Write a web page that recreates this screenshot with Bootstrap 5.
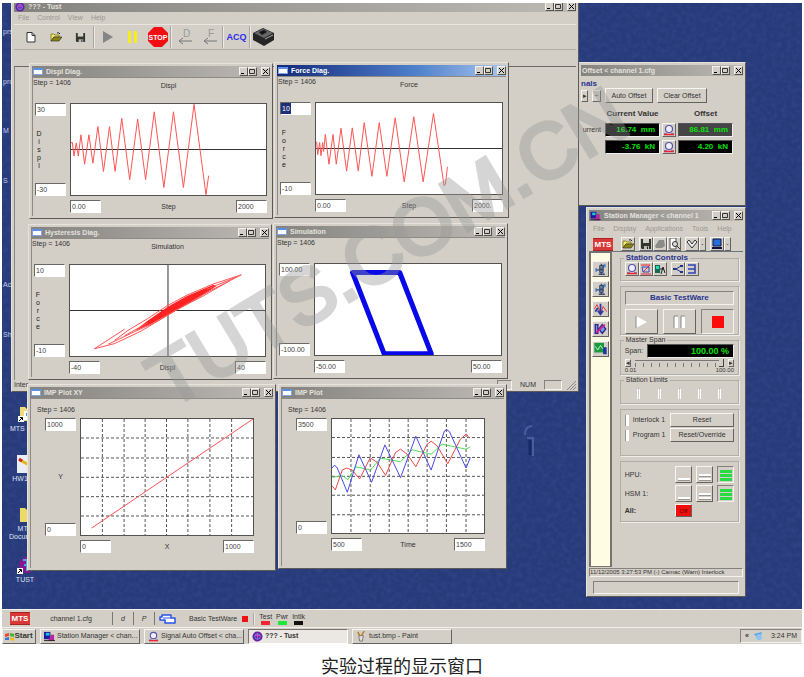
<!DOCTYPE html>
<html lang="zh">
<head>
<meta charset="utf-8">
<meta name="viewport" content="width=device-width, initial-scale=1">
<title>Tust</title>
<link href="https://cdn.jsdelivr.net/npm/bootstrap@5.3.0/dist/css/bootstrap.min.css" rel="stylesheet">
<style>
:root{--face:#d3cfc7;--dark:#77746f;--navy:#273a7a}
body{font-family:"Liberation Sans",sans-serif;font-size:7px;line-height:8px;color:#333;background:#fff;padding:3px 2px 0}
button{font:inherit;color:inherit;padding:0}
.desk{background:var(--navy);overflow:hidden;min-height:604px}
.texture{position:absolute;inset:0;width:100%;height:100%}
.win{position:absolute;background:var(--face);border:1px solid;border-color:#e6e3dc #5c5a56 #5c5a56 #e6e3dc;padding:2px}
.titlebar{height:11px;background:linear-gradient(90deg,#85837f,#bdbab4);color:#e4e2dd;font-weight:700;gap:3px;padding-left:1px}
.titlebar.live{background:linear-gradient(90deg,#14297a,#4d7fca 60%,#a9c6ee);color:#fff}
.wicon{width:10px;height:7px;background:#fff;border:1px solid #7fa4e8;border-top:2px solid #5d8ee6}
.wbtn{width:9px;height:9px;background:var(--face);border:1px solid;border-color:#f4f2ee #55534f #55534f #f4f2ee;display:flex;align-items:center;justify-content:center}
.wbtn svg{width:7px;height:7px}
.plotgrid{display:grid;grid-template-columns:31px 1fr;column-gap:4px;padding:0 3px 3px 2px;border-left:1px solid #8e8b86;border-top:1px solid #8e8b86}
.head{height:25px;white-space:nowrap}
.headtitle{padding-top:4px}
.step{padding-top:1px;width:0}
.shiftl{margin-left:-2px}
.plot{display:block;width:100%;height:93px;background:#fff;border:1px solid #55534f}
.plot *{vector-effect:non-scaling-stroke;fill:none}
.plot .solid{fill:#f22}
.axisrow{padding-top:4px}
.field{width:31px;height:13px;font-size:7px;line-height:9px;color:#444;background:#fff;border:1px solid;border-color:#6b6965 #fff #fff #6b6965;border-radius:0;padding:0 1px;min-width:0}
.field.sel{color:#fff;background:linear-gradient(90deg,#1d2f78 10px,#fff 10px)}
.vlabel{text-align:center;width:8px;color:#222}
.imp .plotgrid{padding:0 19px 15px 14px}
.imp .head{height:19px}
.imp .step{padding-top:7px;margin-left:-8px}
.imp .plot{height:118px}
.imp2 .plotgrid{padding-left:14px}
.imp2 .plot{height:116px}
.menu{color:#9a9791;font-size:7px}
.menu a{color:inherit;text-decoration:none}
.w-main .menu{padding:2px 4px}
.tb{height:26px;border-top:1px solid #e9e6e0;border-bottom:1px solid #b0ada6}
.tb button,.flatbtn{background:none;border:0;display:flex;align-items:center;justify-content:center}
.tb button{width:25px;height:24px}
.vsep{width:2px;height:22px;border-left:1px solid #aaa7a0;border-right:1px solid #eceae5}
.mdi{border-top:1px solid #6c6a66;border-left:1px solid #8b8883;margin-top:16px}
.raised{background:var(--face);border:1px solid;border-color:#f7f5f1 #65635f #65635f #f7f5f1;display:flex;align-items:center;justify-content:center}
.sunk{border:1px solid;border-color:#85827d #f5f3ef #f5f3ef #85827d}
.readout{background:#000;color:#0be00b;font-weight:700;text-align:right;font-size:8px;line-height:12px;border:1px solid;border-color:#555 #eee #eee #555;padding-right:4px;white-space:pre}
.readout.dim{background:#454545}
.group{border:1px solid #b1aea7;box-shadow:1px 1px 0 #efede8;position:relative}
.gtitle{background:var(--face);line-height:8px;padding:0 2px;width:max-content;margin:-5px 0 0 3px}
.blue{color:#29348e;font-weight:700}
.bold8{font-size:8px;font-weight:700}
.ico{width:14px;height:14px}
.ico svg{width:12px;height:12px}
.palette{background:#fffce4;width:29px;border:1px solid #77746f;border-left-width:2px;border-right-width:2px}
.palette .raised{width:17px;height:16px}
.mts{background:#d83838;color:#fff;font-weight:700;font-size:8px;line-height:11px;width:20px;text-align:center;border-top:1px solid #a22;border-bottom:1px solid #a22}
.tbtn{width:33px;height:25px}
.slot{width:3px;height:11px;border-left:1px solid #fff;border-right:1px solid #fff;border-top:1px solid #aaa}
.lvl{width:17px;height:17px;flex-direction:column;gap:1px;justify-content:flex-end;padding-bottom:1px}
.lvl i{display:block;width:12px;height:3px;background:#fff;border-bottom:1px solid #99968f}
.lvl.on i{background:#27dc42;border:0;height:3px}
.check{width:4px;height:11px;appearance:none;background:#fff;border:0;border-left:1px solid #999;margin:0}
.scale{appearance:none;background:repeating-linear-gradient(90deg,#777 0 1px,transparent 1px 8px) 0 5px/100% 4px no-repeat,linear-gradient(#777,#777) 0 2px/100% 1px no-repeat;height:9px;min-width:0}
.scale::-webkit-slider-thumb{appearance:none;width:5px;height:8px;background:var(--face);border-right:1px solid #444;border-bottom:1px solid #444}
.panel{gap:5px;min-width:0}
.offgrid{display:grid;grid-template-columns:24px 55px 18px 55px;row-gap:3px;align-items:center}
.offgrid b{font-size:8px;line-height:13px;text-align:center;white-space:nowrap}
.hpu{display:grid;grid-template-columns:1fr 17px 17px 17px;gap:2px 4px;align-items:center}
.w-sta .menu{gap:9px!important}
.dico{position:absolute;color:#dfe3f3;text-align:center;width:42px}
.dico svg{display:block;margin:0 auto 2px;width:18px;height:18px}
.edge{position:absolute;left:1px;color:#c6cde8}
.wm{position:absolute;left:0;top:0;width:800px;height:604px;pointer-events:none}
.bar{background:var(--face);border-top:1px solid #f3f1ec;height:18px}
.bar.task{height:17px}
.appbtn{background:none;border:0;border-right:1px solid #777;height:13px}
.taskbtn{width:100px;height:15px;gap:2px;justify-content:flex-start;padding-left:3px;white-space:nowrap;overflow:hidden}
.taskbtn svg{width:11px;height:11px;flex:none}
.taskbtn.act{background:#ebe8e3;border-color:#77746f #fff #fff #77746f;font-weight:700}
.lamp i{display:block;width:9px;height:4px;margin:0 auto}
.caption-line{font:18px/20px "Noto Sans CJK SC",sans-serif;color:#222;text-align:center;padding:11px 0 2px}
/* window places on the desktop */
.w-main{left:9px;top:-5px;width:568px;height:394px;padding-bottom:1px}
.w-displ{left:27px;top:60px;width:244px}
.w-force{left:272px;top:59px;width:235px}
.w-hyst{left:26px;top:221px;width:244px}
.w-sim{left:271px;top:220px;width:235px}
.w-xy{left:25px;top:381px;width:249px}
.w-imp{left:276px;top:381px;width:229px}
.w-off{left:576px;top:59px;width:168px;height:144px}
.w-sta{left:584px;top:204px;width:160px;height:390px}
</style>
<script src="https://cdn.jsdelivr.net/npm/bootstrap@5.3.0/dist/js/bootstrap.bundle.min.js"></script>
</head>
<body class="min-vh-100 d-flex flex-column">
<svg width="0" height="0" class="position-absolute" aria-hidden="true">
<symbol id="i-open" viewBox="0 0 12 12"><path d="M1 3h3l1 1h4v2H4L1 10z" fill="#f1e36b" stroke="#6f6600" stroke-width=".7"/><path d="M4 6h8l-3 4H1z" fill="#8c8513" stroke="#333" stroke-width=".7"/><path d="M7 2q2-1 3 1" stroke="#222" fill="none"/></symbol>
<symbol id="i-save" viewBox="0 0 12 12"><path d="M1 1h10v10H2L1 10z" fill="#34372b"/><path d="M3 1h6v4H3z" fill="#d5d2ca"/><path d="M4 8h5v3H4z" fill="#bbb"/><path d="M7 8.500h1V11H7z" fill="#222"/></symbol>
<symbol id="i-ring" viewBox="0 0 12 12"><circle cx="6" cy="5" r="3.500" fill="#eef" stroke="#5454a8" stroke-width="1.200"/><path d="M1 10h3M8 10h3" stroke="#33b" /><path d="M1 10.500h10" stroke="#e23" stroke-width="1.500"/></symbol>
<symbol id="i-man" viewBox="0 0 16 16"><path d="M9 2v12M6 14h7M3 9h9M11 3v4" stroke="#3c4b68" fill="none" stroke-width="1.600"/><path d="M7 4h4v4H7zM7 9h4v3H7z" fill="#6b8096" stroke="#34436a"/><path d="M13 2v4M3 7v4" stroke="#27c" stroke-width="1.500"/></symbol>
<symbol id="i-pc" viewBox="0 0 12 12"><path d="M0 1h7v8H0z" fill="#1c1c9a"/><path d="M2 2h4v3H2z" fill="#1bc5dc"/><path d="M7 4h4v7H5V8h2z" fill="#b722a4"/><path d="M0 10h12v1H0z" fill="#222"/></symbol>
<symbol id="i-tust" viewBox="0 0 12 12"><circle cx="6" cy="6" r="5.500" fill="#6a209e"/><circle cx="6" cy="6" r="3" fill="none" stroke="#47a5ea"/><path d="M6 2v7M3 5h6" stroke="#e04bd0"/></symbol>
</svg>

<main class="desk flex-grow-1 position-relative">
<svg class="texture" aria-hidden="true"><filter id="grain"><feTurbulence type="fractalNoise" baseFrequency=".2" numOctaves="2" seed="4"/><feColorMatrix values="0 0 0 0 .05  0 0 0 0 .09  0 0 0 0 .32  0 .7 0 0 -.25"/></filter><rect width="100%" height="100%" filter="url(#grain)"/></svg>
<span class="edge" style="top:25px">prs,</span><span class="edge" style="top:75px">pro</span><span class="edge" style="top:124px">M</span><span class="edge" style="top:174px">S</span><span class="edge" style="top:278px">Ac</span><span class="edge" style="top:328px">Sh</span>
<div class="dico" style="left:2px;top:402px"><svg viewBox="0 0 18 18"><path d="M4 2h5l2 2h7v12H4z" fill="#eddc78"/><path d="M8 6h10v9H8z" fill="#fff"/><path d="M10 8h8v3h-8z" fill="#4a95e4"/><path d="M2 11h6v6H2z" fill="#fff"/><path d="M3 16l3-3M4 12.500h2.500V15" stroke="#000" fill="none"/></svg>MTS Flex</div>
<div class="dico" style="left:0;top:452px"><svg viewBox="0 0 18 18"><path d="M3 0h14v18H3z" fill="#e9edf8"/><path d="M6 5l9 5" stroke="#e6b413" stroke-width="3"/><path d="M5 4l3 2" stroke="#c22" stroke-width="3"/></svg>HW1.2</div>
<div class="dico" style="left:2px;top:502px"><svg viewBox="0 0 18 18"><path d="M4 3h5l2 2h7v12H4z" fill="#ecd968"/></svg>MTS<br>Document</div>
<div class="dico" style="left:2px;top:553px"><svg viewBox="0 0 18 18"><circle cx="11" cy="9" r="8" fill="#84188f"/><path d="M7 4h8M11 3v12M8 9h8" stroke="#48a8e8" stroke-width="2"/><path d="M1 12h6v6H1z" fill="#fff"/><path d="M2 17l3-3M3 13.500h2.500V16" stroke="#000" fill="none"/></svg>TUST</div>
<svg class="dico" style="left:514px;top:420px;height:40px" viewBox="0 0 42 40" aria-hidden="true"><path d="M9 12q0-9 7-9M11 15l6 0v18" stroke="#4c5d9c" stroke-width="2" fill="none"/><path d="M14 17v15" stroke="#17286a" stroke-width="3"/></svg>

<section class="win w-off">
<div class="titlebar d-flex align-items-center">Offset &lt; channel 1.cfg</div>
<div class="blue bold8 pt-1">nals</div>
<div class="d-flex align-items-center mb-1"><button class="raised" style="width:7px;height:12px">▸</button><button class="raised ms-1" style="width:9px;height:12px" aria-label="Spin">÷</button><button class="raised ms-1" style="width:48px;height:15px">Auto Offset</button><button class="raised ms-1" style="width:50px;height:15px">Clear Offset</button></div>
<div class="offgrid"><span></span><b>Current Value</b><span></span><b>Offset</b>
<span class="text-end pe-1">urrent</span><output class="readout">16.74  mm</output><button class="raised ico mx-auto" aria-label="Zero"><svg><use href="#i-ring"/></svg></button><output class="readout dim">86.81  mm</output>
<span></span><output class="readout">-3.76  kN</output><button class="raised ico mx-auto" aria-label="Zero"><svg><use href="#i-ring"/></svg></button><output class="readout">4.20  kN</output></div>
</section>

<section class="win w-main d-flex flex-column">
<div class="titlebar d-flex align-items-center"><svg width="10" height="10"><use href="#i-tust"/></svg>??? - Tust</div>
<nav class="menu d-flex gap-2"><a href="#">File</a><a href="#">Control</a><a href="#">View</a><a href="#">Help</a></nav>
<div class="tb d-flex align-items-center ps-1">
<button aria-label="New"><svg width="10" height="11"><path d="M1 .500h5l3 3V10H1z" fill="#fff" stroke="#333"/><path d="M6 .500v3h3" fill="none" stroke="#333"/></svg></button>
<button aria-label="Open"><svg width="12" height="12"><use href="#i-open"/></svg></button>
<button aria-label="Save"><svg width="11" height="11"><use href="#i-save"/></svg></button><i class="vsep"></i>
<button aria-label="Run"><svg width="12" height="14"><path d="M1 1l10 6-10 6z" fill="#858585"/></svg></button>
<button aria-label="Pause"><svg width="12" height="12"><path d="M1 0h3v12H1zM7 0h3v12H7z" fill="#f7ee16"/></svg></button>
<button aria-label="Stop"><svg width="20" height="20"><path d="M6 0h8l6 6v8l-6 6H6l-6-6V6z" fill="#f30d13"/><text x="10" y="13" text-anchor="middle" font-size="7" font-weight="700" fill="#fff">STOP</text></svg></button><i class="vsep"></i>
<button aria-label="D"><svg width="16" height="18"><text x="6" y="9" font-size="10" fill="#999">D</text><path d="M15 13H3M6 10l-4 3 4 3" stroke="#777" fill="none"/></svg></button>
<button aria-label="F"><svg width="16" height="18"><text x="6" y="9" font-size="10" fill="#999">F</text><path d="M15 13H3M6 10l-4 3 4 3" stroke="#777" fill="none"/></svg></button><i class="vsep"></i>
<button class="fw-bold" style="color:#2b2bf0;font-size:9px">ACQ</button><i class="vsep"></i>
<button aria-label="Controller"><svg width="21" height="18"><path d="M0 5l10-5 11 5v7l-10 6L0 12z" fill="#262626"/><path d="M1 5l9-4 10 4-9 5z" fill="#666"/><path d="M6 4l5-2 3 2-5 3z" fill="#161616"/><path d="M12 11l8-4" stroke="#aaa"/></svg></button>
</div>
<div class="mdi flex-grow-1"></div>
<div class="d-flex align-items-center mt-auto"><span>Inter</span><span class="sunk ms-auto" style="width:15px;height:10px"></span><span class="px-1 ms-1">NUM</span><span class="sunk ms-1" style="width:18px;height:10px"></span><svg width="10" height="10" class="ms-1"><path d="M1 10l9-9M4 10l6-6M7 10l3-3" stroke="#888"/></svg></div>
</section>

<section class="win w-displ"><div class="titlebar d-flex align-items-center"><i class="wicon"></i>Displ Diag.</div>
<div class="plotgrid"><div class="head step shiftl">Step = 1406</div><div class="head headtitle text-center">Displ</div>
<div class="d-flex flex-column justify-content-between"><input class="field" aria-label="Displ maximum" value="30"><span class="vlabel">D<br>i<br>s<br>p<br>l</span><input class="field" aria-label="Displ minimum" value="-30"></div>
<svg class="plot" viewBox="209 311 588 278" preserveAspectRatio="none"><path d="M209 450H797" stroke="#333"/><polyline stroke="#f55" points="209,430 213,428 218,470 225,430 231,470 239,405 250,495 263,405 275,492 290,380 307,517 325,380 342,517 362,355 386,542 410,357 434,542 460,335 489,566 518,335 548,566 580,312 616,588 624,530"/></svg>
<span></span><div class="axisrow d-flex justify-content-between align-items-center"><input class="field" aria-label="Step start" value="0.00"><span>Step</span><input class="field" aria-label="Step end" value="2000"></div></div></section>

<section class="win w-force"><div class="titlebar live d-flex align-items-center"><i class="wicon"></i>Force Diag.</div>
<div class="plotgrid"><div class="head step shiftl">Step = 1406</div><div class="head headtitle text-center">Force</div>
<div class="d-flex flex-column justify-content-between"><input class="field sel" aria-label="Force maximum" value="10"><span class="vlabel">F<br>o<br>r<br>c<br>e</span><input class="field" aria-label="Force minimum" value="-10"></div>
<svg class="plot" viewBox="135 307 559 278" preserveAspectRatio="none"><path d="M135 446H694" stroke="#333"/><polyline stroke="#f55" points="137,425 140,465 146,428 150,468 155,428 158,455 163,403 174,494 186,403 196,494 210,384 227,515 244,383 262,515 280,367 303,531 325,367 348,531 373,352 400,548 429,349 457,548 488,339 520,560 524,555 530,502"/></svg>
<span></span><div class="axisrow d-flex justify-content-between align-items-center"><input class="field" aria-label="Step start" value="0.00"><span>Step</span><input class="field" aria-label="Step end" value="2000."></div></div></section>

<section class="win w-hyst"><div class="titlebar d-flex align-items-center"><i class="wicon"></i>Hysteresis Diag.</div>
<div class="plotgrid"><div class="head step shiftl">Step = 1406</div><div class="head headtitle text-center">Simulation</div>
<div class="d-flex flex-column justify-content-between"><input class="field" aria-label="Force maximum" value="10"><span class="vlabel">F<br>o<br>r<br>c<br>e</span><input class="field" aria-label="Force minimum" value="-10"></div>
<svg class="plot" viewBox="204 148 593 278" preserveAspectRatio="none"><path d="M204 287H797M502 148V426" stroke="#333"/><path class="solid" d="M400 350L440 318L500 276L560 243L640 208L650 212L600 244L520 290L450 328z"/><path stroke="#f55" d="M278 404L370 344M278 404L340 388L420 350L520 290L620 232L725 178L640 206L560 240L500 272L440 312L380 348L340 378M320 390L400 352L460 325L530 284L610 242L690 196M370 364L440 325M620 222L710 185"/></svg>
<span></span><div class="axisrow d-flex justify-content-between align-items-center"><input class="field" aria-label="Displ start" value="-40"><span>Displ</span><input class="field" aria-label="Displ end" value="40"></div></div></section>

<section class="win w-sim"><div class="titlebar d-flex align-items-center"><i class="wicon"></i>Simulation</div>
<div class="plotgrid"><div class="head step shiftl">Step = 1406</div><div class="head"></div>
<div class="d-flex flex-column justify-content-between"><input class="field" aria-label="Maximum" value="100.00"><input class="field" aria-label="Minimum" value="-100.00"></div>
<svg class="plot" viewBox="130 144 560 279" preserveAspectRatio="none"><path d="M243 170H385L480 419H338z" stroke="#0808e8" stroke-width="5" stroke-linejoin="round"/></svg>
<span></span><div class="axisrow d-flex justify-content-between align-items-center"><input class="field" aria-label="Start" value="-50.00"><input class="field" aria-label="End" value="50.00"></div></div></section>

<section class="win imp w-xy"><div class="titlebar d-flex align-items-center"><i class="wicon"></i>IMP Plot XY</div>
<div class="plotgrid"><div class="head step">Step = 1406</div><div class="head"></div>
<div class="d-flex flex-column justify-content-between"><input class="field" aria-label="Y maximum" value="1000"><span class="text-center">Y</span><input class="field" aria-label="Y minimum" value="0"></div>
<svg class="plot" viewBox="240 112 523 354" preserveAspectRatio="none"><path stroke="#555" stroke-dasharray="3 2" d="M305 112V466M371 112V466M435 112V466M500 112V466M565 112V466M632 112V466M698 112V466M240 170H763M240 231H763M240 290H763M240 349H763M240 408H763"/><path stroke="#f55" d="M272 445L763 112"/></svg>
<span></span><div class="axisrow d-flex justify-content-between align-items-center"><input class="field" aria-label="X start" value="0"><span>X</span><input class="field" aria-label="X end" value="1000"></div></div></section>

<section class="win imp imp2 w-imp"><div class="titlebar d-flex align-items-center"><i class="wicon"></i>IMP Plot</div>
<div class="plotgrid"><div class="head step">Step = 1406</div><div class="head"></div>
<div class="d-flex flex-column justify-content-between"><input class="field" aria-label="Maximum" value="3500"><input class="field" aria-label="Minimum" value="0"></div>
<svg class="plot" viewBox="184 114 457 344" preserveAspectRatio="none"><path stroke="#555" stroke-dasharray="3 2" d="M241 114V458M299 114V458M356 114V458M413 114V458M470 114V458M528 114V458M587 114V458M184 170H641M184 230H641M184 287H641M184 344H641M184 403H641"/><polyline stroke="#54dc54" points="186,290 215,285 232,297 255,258 300,268 330,232 390,243 425,207 482,220 515,190 587,205 600,198"/><polyline stroke="#f04848" points="184,315 194,328 215,268 228,262 245,268 267,295 299,231 320,245 345,284 375,215 390,205 410,220 436,258 470,190 482,181 500,195 532,249 570,175 588,159 597,172"/><polyline stroke="#4a4ae6" points="184,262 192,253 200,262 230,335 265,222 303,305 343,192 390,291 436,166 482,268 522,150 529,146 537,152 587,262 600,230"/></svg>
<span></span><div class="axisrow d-flex justify-content-between align-items-center"><input class="field" aria-label="Time start" value="500"><span>Time</span><input class="field" aria-label="Time end" value="1500"></div></div></section>

<section class="win w-sta d-flex flex-column">
<div class="titlebar d-flex align-items-center"><svg width="11" height="10"><use href="#i-pc"/></svg><span class="text-nowrap">Station Manager &lt; channel 1</span></div>
<nav class="menu d-flex ps-1 pt-1"><a href="#">File</a><a href="#">Display</a><a href="#">Applications</a><a href="#">Tools</a><a href="#">Help</a></nav>
<div class="d-flex align-items-center ps-1 pt-1"><span class="mts me-2">MTS</span>
<button class="raised ico" aria-label="Open"><svg><use href="#i-open"/></svg></button><button class="raised ico ms-1" aria-label="Save"><svg><use href="#i-save"/></svg></button><button class="raised ico" aria-label="Print"><svg viewBox="0 0 12 12"><path d="M1 8l4-6h5l1 6-3 2H2z" fill="#8b8b8b"/></svg></button><button class="raised ico" aria-label="Preview"><svg viewBox="0 0 12 12"><path d="M2 0h6v11H2z" fill="#fff" stroke="#555"/><circle cx="7" cy="6" r="2.500" fill="#ddd" stroke="#333"/><path d="M9 8l3 3" stroke="#333"/></svg></button>
<button class="raised ico ms-1" aria-label="Check"><svg viewBox="0 0 12 12"><path d="M1 4l5 6 5-6-2-2-3 4-3-4z" fill="#eee" stroke="#333"/></svg></button><button class="raised" style="width:7px;height:14px" aria-label="More">-</button>
<button class="raised ico ms-1" aria-label="Display"><svg viewBox="0 0 12 12"><path d="M2 1h8v7H2z" fill="#2470d8" stroke="#114"/><path d="M1 10h10" stroke="#114" stroke-width="2"/></svg></button><button class="raised" style="width:7px;height:14px" aria-label="More">-</button></div>
<div class="d-flex flex-grow-1 border-top border-secondary">
<div class="palette d-flex flex-column align-items-center gap-1 pt-2">
<button class="raised" aria-label="Station setup"><svg width="15" height="14"><use href="#i-man"/></svg></button>
<button class="raised" aria-label="Manual command"><svg width="15" height="14"><use href="#i-man"/></svg></button>
<button class="raised" aria-label="Function generator"><svg width="15" height="14" viewBox="0 0 16 16"><path d="M1 8l3-5 4 10 3-8 4 6" stroke="#e23" fill="none"/><path d="M8 2v12M5 10l3 4 3-4M2 11l3-4" stroke="#2a3aa0" fill="none" stroke-width="2"/></svg></button>
<button class="raised" aria-label="Scope"><svg width="15" height="14" viewBox="0 0 16 16"><path d="M2 3h3v10H2zM10 3l4 5-4 5-4-5z" fill="#6fa0dd" stroke="#31208e" stroke-width="1.500"/><path d="M3 12l10-9" stroke="#d3208e" stroke-width="2"/></svg></button>
<button class="raised" aria-label="Test"><svg width="15" height="14" viewBox="0 0 16 16"><path d="M1 1h11v11H1z" fill="#1a9b3a"/><path d="M2 5l3 4 3-5 3 4" stroke="#cfe" fill="none"/><path d="M11 6h4v8h-4z" fill="#1e35a0"/></svg></button>
</div>
<div class="panel flex-grow-1 d-flex flex-column ps-2 pe-1">
<div class="group" style="margin-top:6px"><div class="gtitle blue bold8">Station Controls</div><div class="d-flex ps-1" style="padding-bottom:4px">
<button class="raised ico" aria-label="Offset"><svg><use href="#i-ring"/></svg></button><button class="raised ico" aria-label="Limits"><svg viewBox="0 0 12 12"><path d="M1 2h9L3 9" stroke="#e23" fill="none"/><path d="M2 4h7v5H3z" stroke="#34b" fill="none"/><path d="M1 11h10" stroke="#e23"/></svg></button><button class="raised ico" aria-label="Auto"><svg viewBox="0 0 12 12"><path d="M1 2h5v8H1z" fill="#156b53"/><path d="M2 3h3v3H2z" fill="#2bd7b4"/><path d="M6 6h4M9 4l2 6M9 4l-2 7" stroke="#222"/></svg></button>
<button class="raised ico ms-1" aria-label="Split"><svg viewBox="0 0 12 12"><path d="M4 6l5-3M4 6l5 3M1 6h4" stroke="#22338e" fill="none"/><path d="M8 2h3v2H8zM8 8h3v2H8zM1 5h3v2H1z" fill="#22338e"/></svg></button><button class="raised ico" aria-label="Merge"><svg viewBox="0 0 12 12"><path d="M2 2h7v8H2M2 6h7" stroke="#3340b8" stroke-width="1.600" fill="none"/></svg></button></div></div>
<div class="group p-1 pb-0"><div class="sunk blue bold8 text-center" style="line-height:12px">Basic TestWare</div>
<div class="d-flex justify-content-between mt-1"><button class="raised tbtn" aria-label="Run"><svg width="13" height="14"><path d="M1 1l11 6-11 6z" fill="#fff"/><path d="M1 13V1" stroke="#888"/></svg></button><button class="raised tbtn" aria-label="Pause"><svg width="14" height="13"><path d="M2 1h4v12H2zM9 1h4v12H9z" fill="#fff"/><path d="M2 13V1h4M9 13V1h4" fill="none" stroke="#888"/></svg></button><button class="raised sunk tbtn" aria-label="Stop"><svg width="12" height="12"><path d="M0 0h12v12H0z" fill="#fb0b0b"/></svg></button></div></div>
<div class="group"><div class="gtitle">Master Span</div><div class="d-flex align-items-center px-1"><span>Span:</span><output class="readout flex-grow-1 ms-1" style="font-size:9px">100.00 %</output></div>
<div class="d-flex align-items-center px-1"><button class="raised" style="width:6px;height:8px" aria-label="Less">◂</button><input type="range" class="scale flex-grow-1 mx-1" value="100" aria-label="Span"><button class="raised" style="width:6px;height:8px" aria-label="More">▸</button></div><div class="d-flex justify-content-between px-1" style="font-size:6px;line-height:7px"><span>0.01</span><span>100.00</span></div></div>
<div class="group"><div class="gtitle">Station Limits</div><div class="d-flex justify-content-around px-2 py-1"><i class="slot"></i><i class="slot"></i><i class="slot"></i><i class="slot"></i><i class="slot"></i></div></div>
<div class="group px-1 d-flex flex-column" style="gap:1px;padding:3px 0 13px"><div class="d-flex align-items-center text-nowrap"><input type="checkbox" class="check me-1" id="il"><label for="il">Interlock 1</label><button class="raised ms-auto" style="width:64px;height:14px">Reset</button></div><div class="d-flex align-items-center text-nowrap"><input type="checkbox" class="check me-1" id="pg"><label for="pg">Program 1</label><button class="raised ms-auto" style="width:64px;height:14px">Reset/Override</button></div></div>
<div class="group p-1 hpu"><span>HPU:</span><button class="raised lvl" aria-label="HPU off"><i></i></button><button class="raised lvl" aria-label="HPU low"><i></i><i></i></button><button class="raised sunk lvl on" aria-label="HPU high"><i></i><i></i><i></i></button>
<span>HSM 1:</span><button class="raised lvl" aria-label="HSM off"><i></i></button><button class="raised lvl" aria-label="HSM low"><i></i><i></i></button><button class="raised sunk lvl on" aria-label="HSM high"><i></i><i></i><i></i></button>
<b>All:</b><button class="raised" style="width:17px;height:13px;background:#f20d0d;color:#600;font-size:6px">Off</button></div>
</div></div>
<div class="sunk text-nowrap overflow-hidden" style="font-size:6px;line-height:7px;margin-top:1px">11/12/2005 3:27:53 PM (-) Camac (Warn) Interlock</div><div class="sunk mx-1 mt-1" style="height:13px"></div>
</section>

<svg class="wm" viewBox="2 3 800 604" aria-hidden="true"><text transform="translate(169 410) rotate(-31)" font-size="78" fill="#999" stroke="#999" stroke-width="4" opacity=".4">TUTS.COM.CN</text></svg>
</main>

<div class="bar d-flex align-items-center ps-2"><span class="mts">MTS</span><button class="appbtn" style="width:83px">channel 1.cfg</button><button class="appbtn" style="width:21px"><i>d</i></button><button class="appbtn" style="width:21px"><i>P</i></button><svg width="18" height="12" class="ms-1"><path d="M3 2h9v3h4v5H6V7H1V4h2z" fill="#fff" stroke="#2754e6" stroke-width="1.500" stroke-linejoin="round"/><path d="M4 5h8" stroke="#2754e6"/></svg><span class="ms-2 ps-1">Basic TestWare</span><svg width="8" height="8" class="mx-1"><path d="M1 1h6v6H1z" fill="#e11"/></svg><span class="vsep" style="height:12px"></span>
<span class="lamp text-center ms-1">Test<i style="background:#f3262e"></i></span><span class="lamp text-center ms-1">Pwr<i style="background:#20e83b"></i></span><span class="lamp text-center ms-1">Intlk<i style="background:#111"></i></span></div>
<div class="bar task d-flex align-items-center"><button class="raised fw-bold" style="width:34px;height:15px;font-size:8px"><svg width="9" height="9"><path d="M0 2l4-1v3L0 5z" fill="#e43"/><path d="M5 1l4 1v3L5 4z" fill="#3b3"/><path d="M0 6l4-1v3L0 8z" fill="#37d"/><path d="M5 5l4 1v3L5 8z" fill="#eb2"/></svg>Start</button>
<button class="raised taskbtn ms-1"><svg><use href="#i-pc"/></svg>Station Manager &lt; chan...</button><button class="raised taskbtn ms-1"><svg><use href="#i-ring"/></svg>Signal Auto Offset &lt; cha...</button><button class="raised taskbtn act ms-1"><svg><use href="#i-tust"/></svg>??? - Tust</button><button class="raised taskbtn ms-1"><svg viewBox="0 0 12 12"><path d="M3 5h5l-1 6H4z" fill="#ddd" stroke="#777"/><path d="M4 5L2 1M6 5l3-5" stroke="#b72" stroke-width="1.500"/></svg>tust.bmp - Paint</button>
<span class="sunk d-flex align-items-center ms-auto px-1 gap-1" style="height:14px"><b>«</b><svg width="10" height="10"><path d="M1 3l5 6 3-8z" fill="#58a4e8"/><circle cx="6" cy="6" r="3" fill="#8cc4f2"/></svg><span class="ps-1">3:24 PM</span></span></div>
<div class="caption-line">实验过程的显示窗口</div>
<script>
document.querySelectorAll('.titlebar').forEach(function(t){
 t.insertAdjacentHTML('beforeend','<span class="d-flex ms-auto flex-shrink-0"><button class="wbtn" aria-label="Minimize"><svg viewBox="0 0 7 7"><path d="M1 5.500h3" stroke="#000"/></svg></button><button class="wbtn" aria-label="Maximize"><svg viewBox="0 0 7 7"><path d="M.5 1.500h5v4h-5z" fill="none" stroke="#333"/></svg></button><button class="wbtn ms-1" aria-label="Close"><svg viewBox="0 0 7 7"><path d="M1 1l5 5M6 1L1 6" stroke="#000"/></svg></button></span>');
});
</script>
</body>
</html>
